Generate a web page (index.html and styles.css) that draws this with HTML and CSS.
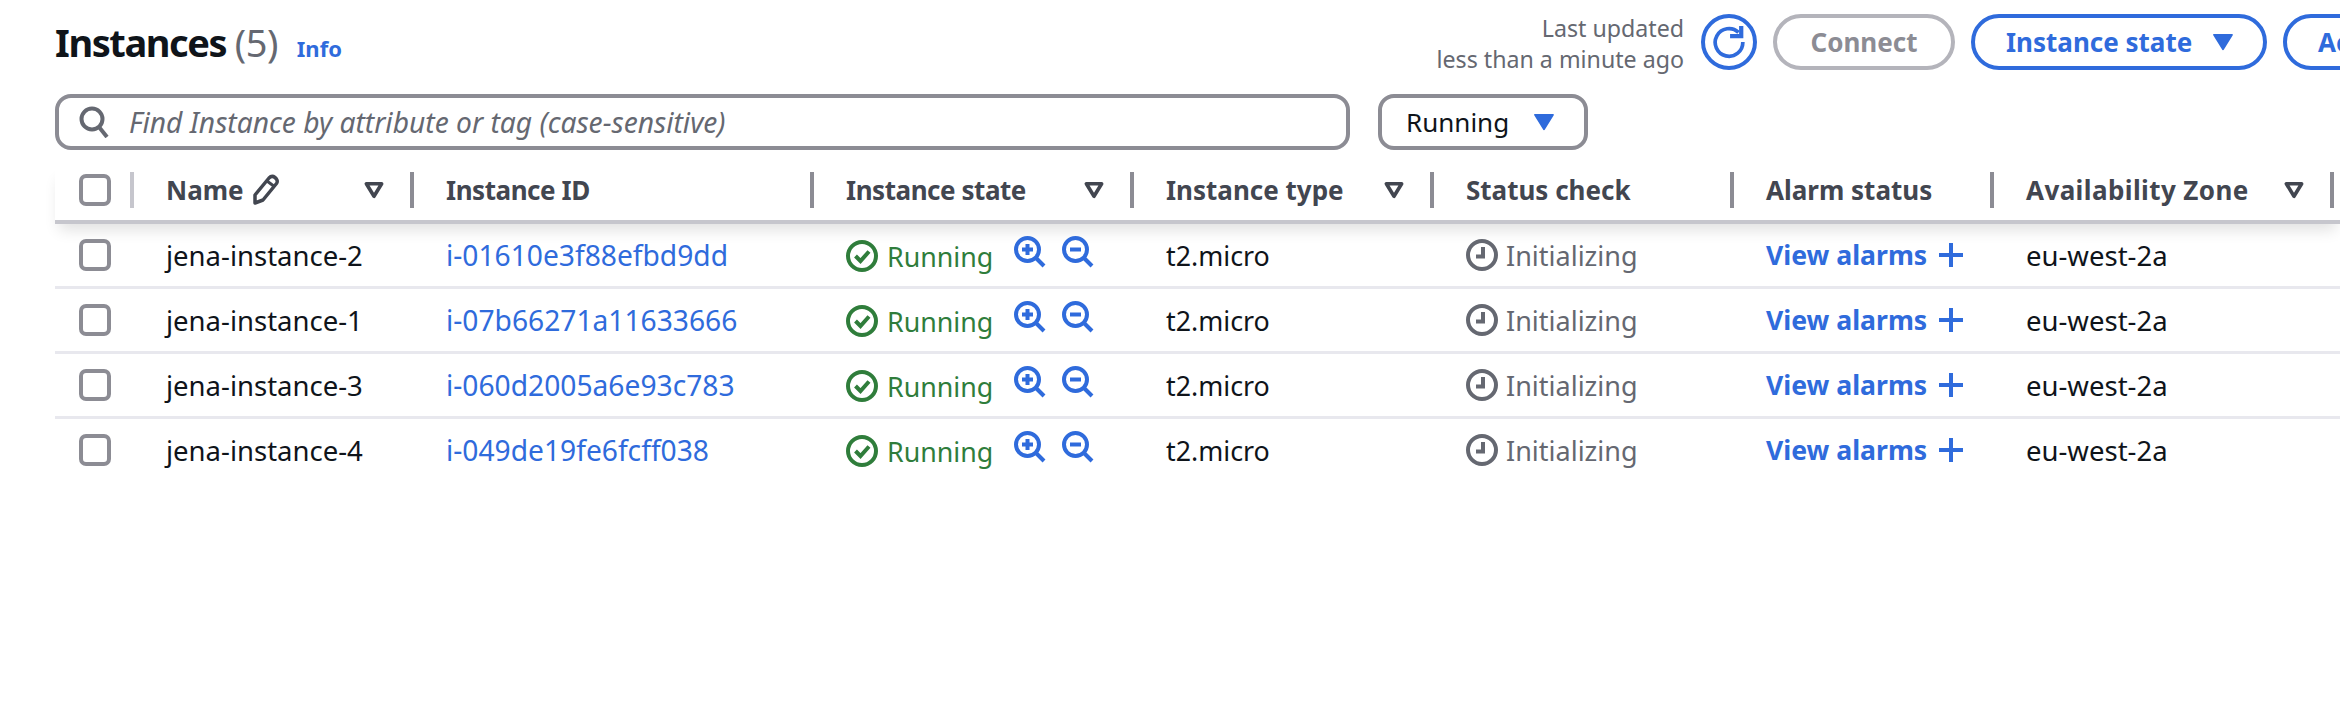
FILE: index.html
```html
<!DOCTYPE html>
<html lang="en">
<head>
<meta charset="utf-8">
<title>Instances</title>
<link rel="stylesheet" href="styles.css">
</head>
<body>
<svg class="defs" aria-hidden="true">
  <symbol id="i-caret" viewBox="0 0 24 20"><path d="M2 2h20L12 18z" fill="currentColor" stroke="currentColor" stroke-width="2" stroke-linejoin="round"/></symbol>
  <symbol id="i-filter" viewBox="0 0 24 20"><path d="M3.500 3h17L12 17z" fill="none" stroke="currentColor" stroke-width="4" stroke-linejoin="round"/></symbol>
  <symbol id="i-check" viewBox="0 0 32 32"><circle cx="16" cy="16" r="14" fill="none" stroke="currentColor" stroke-width="4"/><path d="M9.500 16l5 5 8.500-9.500" fill="none" stroke="currentColor" stroke-width="4"/></symbol>
  <symbol id="i-zoomin" viewBox="0 0 32 32"><circle cx="13.500" cy="13.500" r="11.500" fill="none" stroke="currentColor" stroke-width="4"/><path d="M22 22l8 8" stroke="currentColor" stroke-width="4" fill="none"/><path d="M8 13.500h11M13.500 8v11" stroke="currentColor" stroke-width="4" fill="none"/></symbol>
  <symbol id="i-zoomout" viewBox="0 0 32 32"><circle cx="13.500" cy="13.500" r="11.500" fill="none" stroke="currentColor" stroke-width="4"/><path d="M22 22l8 8" stroke="currentColor" stroke-width="4" fill="none"/><path d="M8 13.500h11" stroke="currentColor" stroke-width="4" fill="none"/></symbol>
  <symbol id="i-clock" viewBox="0 0 32 32"><circle cx="16" cy="16" r="14" fill="none" stroke="currentColor" stroke-width="4"/><path d="M17 8v9.500H10" fill="none" stroke="currentColor" stroke-width="4"/></symbol>
  <symbol id="i-plus" viewBox="0 0 24 24"><path d="M0 12h24M12 0v24" stroke="currentColor" stroke-width="4" fill="none"/></symbol>
</svg>

<main class="page">
  <header class="top">
    <div class="title-block">
      <h1 class="title">Instances <span class="count">(5)</span></h1>
      <a class="info">Info</a>
    </div>
    <div class="actions">
      <div class="updated">Last updated<br>less than a minute ago</div>
      <button class="btn-icon" aria-label="Refresh">
        <svg width="34" height="34" viewBox="0 0 32 32"><path d="M25 7A13 13 0 1 0 29 16" fill="none" stroke="currentColor" stroke-width="3.500"/><path d="M17 10.500h10.500V1" fill="none" stroke="currentColor" stroke-width="4"/></svg>
      </button>
      <button class="btn btn-off">Connect</button>
      <button class="btn btn-state">Instance state <svg class="caret" width="22" height="18"><use href="#i-caret"/></svg></button>
      <button class="btn btn-more">Actions</button>
    </div>
  </header>

  <div class="filters">
    <div class="search">
      <svg width="30" height="32" viewBox="0 0 30 32"><circle cx="13" cy="13" r="10.500" fill="none" stroke="#656871" stroke-width="4"/><path d="M20 21l8 10" stroke="#656871" stroke-width="4" fill="none"/></svg>
      <span class="placeholder">Find Instance by attribute or tag (case-sensitive)</span>
    </div>
    <div class="select">Running <svg class="caret" width="22" height="18"><use href="#i-caret"/></svg></div>
  </div>

  <div class="table">
    <div class="row head">
      <div class="cell cell-box"><span class="box"></span><i class="sep sep-light"></i></div>
      <div class="cell">Name
        <svg class="pencil" width="28" height="32" viewBox="0 0 28 32"><path d="M3 21L17 4c2-2 4-2 6-.500s3 4 1.500 6L11 26l-8 3z" fill="none" stroke="currentColor" stroke-width="3.500" stroke-linejoin="round"/><path d="M15 7l8 6" stroke="currentColor" stroke-width="3" fill="none"/></svg>
        <svg class="filter" width="22" height="18"><use href="#i-filter"/></svg><i class="sep"></i></div>
      <div class="cell tight">Instance ID<i class="sep"></i></div>
      <div class="cell tight">Instance state<svg class="filter" width="22" height="18"><use href="#i-filter"/></svg><i class="sep"></i></div>
      <div class="cell">Instance type<svg class="filter" width="22" height="18"><use href="#i-filter"/></svg><i class="sep"></i></div>
      <div class="cell">Status check<i class="sep"></i></div>
      <div class="cell">Alarm status<i class="sep"></i></div>
      <div class="cell wide">Availability Zone<svg class="filter" width="22" height="18"><use href="#i-filter"/></svg><i class="sep"></i></div>
    </div>

    <div class="row body">
      <div class="cell cell-box"><span class="box"></span></div>
      <div class="cell">jena-instance-2</div>
      <div class="cell"><a class="link">i-01610e3f88efbd9dd</a></div>
      <div class="cell state"><svg class="ic-state" width="32" height="32"><use href="#i-check"/></svg><span class="running">Running</span><svg class="ic-zoom" width="32" height="32"><use href="#i-zoomin"/></svg><svg class="ic-zoom" width="32" height="32"><use href="#i-zoomout"/></svg></div>
      <div class="cell type">t2.micro</div>
      <div class="cell status"><svg class="ic-clock" width="32" height="32"><use href="#i-clock"/></svg>Initializing</div>
      <div class="cell alarm">View alarms<svg class="ic-plus" width="24" height="24"><use href="#i-plus"/></svg></div>
      <div class="cell">eu-west-2a</div>
    </div>
    <div class="row body">
      <div class="cell cell-box"><span class="box"></span></div>
      <div class="cell">jena-instance-1</div>
      <div class="cell"><a class="link">i-07b66271a11633666</a></div>
      <div class="cell state"><svg class="ic-state" width="32" height="32"><use href="#i-check"/></svg><span class="running">Running</span><svg class="ic-zoom" width="32" height="32"><use href="#i-zoomin"/></svg><svg class="ic-zoom" width="32" height="32"><use href="#i-zoomout"/></svg></div>
      <div class="cell type">t2.micro</div>
      <div class="cell status"><svg class="ic-clock" width="32" height="32"><use href="#i-clock"/></svg>Initializing</div>
      <div class="cell alarm">View alarms<svg class="ic-plus" width="24" height="24"><use href="#i-plus"/></svg></div>
      <div class="cell">eu-west-2a</div>
    </div>
    <div class="row body">
      <div class="cell cell-box"><span class="box"></span></div>
      <div class="cell">jena-instance-3</div>
      <div class="cell"><a class="link">i-060d2005a6e93c783</a></div>
      <div class="cell state"><svg class="ic-state" width="32" height="32"><use href="#i-check"/></svg><span class="running">Running</span><svg class="ic-zoom" width="32" height="32"><use href="#i-zoomin"/></svg><svg class="ic-zoom" width="32" height="32"><use href="#i-zoomout"/></svg></div>
      <div class="cell type">t2.micro</div>
      <div class="cell status"><svg class="ic-clock" width="32" height="32"><use href="#i-clock"/></svg>Initializing</div>
      <div class="cell alarm">View alarms<svg class="ic-plus" width="24" height="24"><use href="#i-plus"/></svg></div>
      <div class="cell">eu-west-2a</div>
    </div>
    <div class="row body last">
      <div class="cell cell-box"><span class="box"></span></div>
      <div class="cell">jena-instance-4</div>
      <div class="cell"><a class="link">i-049de19fe6fcff038</a></div>
      <div class="cell state"><svg class="ic-state" width="32" height="32"><use href="#i-check"/></svg><span class="running">Running</span><svg class="ic-zoom" width="32" height="32"><use href="#i-zoomin"/></svg><svg class="ic-zoom" width="32" height="32"><use href="#i-zoomout"/></svg></div>
      <div class="cell type">t2.micro</div>
      <div class="cell status"><svg class="ic-clock" width="32" height="32"><use href="#i-clock"/></svg>Initializing</div>
      <div class="cell alarm">View alarms<svg class="ic-plus" width="24" height="24"><use href="#i-plus"/></svg></div>
      <div class="cell">eu-west-2a</div>
    </div>
  </div>
</main>
</body>
</html>
```
FILE: styles.css
```css
* { box-sizing: border-box; }
html, body { margin: 0; background: #fff; overflow: hidden; }
body { width: 2340px; height: 702px; font-family: "Noto Sans", sans-serif; color: #0f141a; }
.defs { position: absolute; width: 0; height: 0; }
.page { padding: 14px 0 0 55px; width: 2340px; overflow: hidden; }

.top { display: flex; height: 56px; }
.title-block { display: flex; align-items: baseline; gap: 16px; height: 56px; width: 1229px; flex: none; padding-top: 5px; }
.title { margin: 0; font-size: 38px; line-height: 46px; font-weight: 700; letter-spacing: -1.4px; }
.count { font-weight: 400; color: #656871; letter-spacing: -0.5px; }
.info { font-size: 22px; font-weight: 700; color: #2f6bdc; margin-left: 3px; margin-top: -1px; }

.actions { display: flex; align-items: center; gap: 16px; white-space: nowrap; flex: none; }
.updated { font-size: 23.2px; line-height: 31px; text-align: right; color: #656871; width: 400px; margin-top: 4px; margin-right: 1px; }
button { font-family: inherit; background: #fff; }
.btn-icon { width: 56px; height: 56px; border: 4px solid #2f6bdc; border-radius: 50%; padding: 0; color: #2f6bdc; display: flex; align-items: center; justify-content: center; flex: none; }
.btn { height: 56px; border: 4px solid #2f6bdc; border-radius: 28px; color: #2f6bdc; font-size: 26px; font-weight: 700; padding: 0 31px; display: flex; align-items: center; flex: none; }
.btn-off { width: 182px; justify-content: center; border-color: #b4b4bb; color: #8c8c94; padding: 0; }
.btn-state { width: 296px; gap: 20px; }
.btn-more { width: 200px; }

.filters { display: flex; gap: 28px; margin-top: 24px; }
.search, .select { height: 56px; border: 4px solid #8c8c94; border-radius: 16px; display: flex; align-items: center; }
.search { width: 1295px; padding-left: 20px; gap: 20px; }
.placeholder { font-size: 28.2px; font-style: italic; color: #656871; }
.select { width: 210px; padding-left: 24px; gap: 24px; font-size: 26px; }
.caret { color: #2f6bdc; flex: none; }

.table { margin-top: 16px; }
.row { display: grid; grid-template-columns: 79px 280px 400px 320px 300px 300px 260px 340px; font-size: 27.5px; }
.cell { position: relative; display: flex; align-items: center; padding-left: 32px; white-space: nowrap; }
.cell-box { padding-left: 24px; }
.box { width: 32px; height: 32px; border: 4px solid #8c8c94; border-radius: 7px; flex: none; }

.head { height: 58px; padding-bottom: 6px; align-items: stretch; font-size: 26px; font-weight: 700; color: #424650; border-bottom: 4px solid #c6c6cd; box-shadow: 0 10px 14px -4px rgba(0, 0, 0, .12); position: relative; }
.tight { letter-spacing: -0.45px; }
.wide { letter-spacing: 0.4px; }
.sep { position: absolute; right: 0; top: 6px; width: 4px; height: 36px; background: #8c8c94; }
.sep-light { background: #c6c6cd; }
.filter { position: absolute; right: 29px; top: 15px; color: #424650; }
.pencil { margin-left: 8px; color: #424650; }

.body { height: 65px; border-bottom: 3px solid #e8e8ee; }
.body.last { border-bottom-color: transparent; }
.link { color: #2f6bdc; font-size: 28.2px; }
.type { font-size: 26.8px; }
.state { gap: 9px; font-size: 26.8px; }
.ic-state { color: #2f7d3b; flex: none; margin-top: 2px; }
.running { color: #2f7d3b; margin-right: 12px; margin-top: 2px; }
.ic-zoom { color: #2f6bdc; flex: none; margin-top: -6px; margin-right: 7px; }
.status { color: #656871; gap: 8px; font-size: 27px; }
.ic-clock { color: #656871; flex: none; }
.alarm { color: #2f6bdc; font-weight: 700; gap: 12px; font-size: 26.6px; }
.ic-plus { color: #2f6bdc; flex: none; }
```
